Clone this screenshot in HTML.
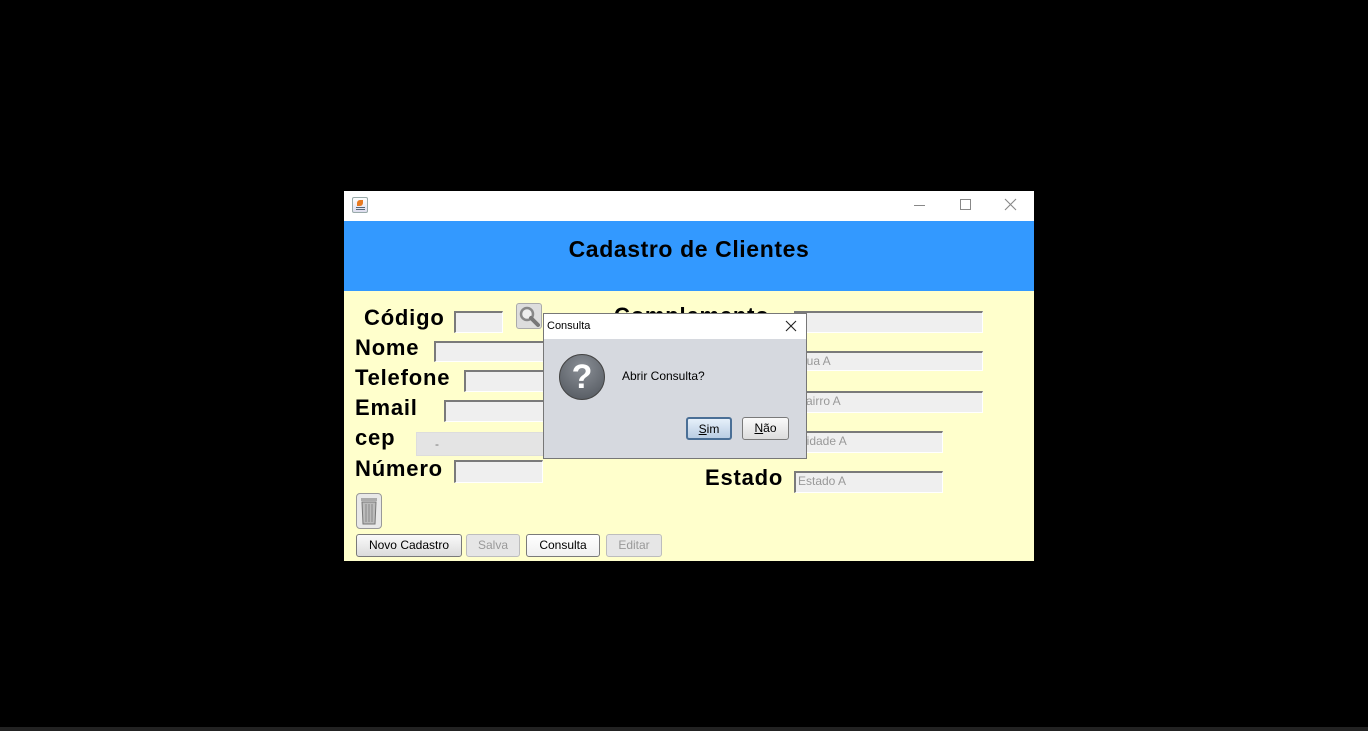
<!DOCTYPE html>
<html><head><meta charset="utf-8"><style>
*{margin:0;padding:0;box-sizing:border-box}
body{width:1368px;height:731px;background:#000;position:relative;overflow:hidden;font-family:"Liberation Sans",sans-serif}
.a{position:absolute}
.lbl{position:absolute;font-weight:bold;font-size:22px;color:#000;line-height:22px;letter-spacing:0.8px}
.fld{position:absolute;background:#efefef;border-top:2px solid #7a7a7a;border-left:2px solid #7a7a7a;border-right:1px solid #fff;border-bottom:1px solid #fff;font-size:12px;color:#999;padding-left:2px;line-height:17px}
.btn{position:absolute;height:23px;border:1px solid #7a7a7a;border-radius:3px;background:linear-gradient(#fafafa,#dcdcdc);font-size:12px;text-align:center;line-height:21px;color:#000}
.dis{border-color:#bdbdbd;color:#999;background:#e6e6e6}
</style></head><body>
<div class="a" style="left:0;top:727px;width:1368px;height:4px;background:#222"></div>
<div class="a" style="left:344px;top:191px;width:690px;height:370px;background:#ffffcc"></div>
<div class="a" style="left:344px;top:191px;width:690px;height:30px;background:#fff"></div>
<div class="a" style="left:352px;top:197px;width:16px;height:16px;border:1px solid #9aa;border-radius:2px;background:linear-gradient(#fff,#dde);"><div class="a" style="left:4px;top:2px;width:6px;height:6px;background:#e87a20;border-radius:50% 0"></div><div class="a" style="left:3px;top:9px;width:9px;height:1px;background:#567"></div><div class="a" style="left:3px;top:11px;width:9px;height:1px;background:#567"></div></div>
<div class="a" style="left:914px;top:205px;width:11px;height:1px;background:#888"></div>
<div class="a" style="left:960px;top:199px;width:11px;height:11px;border:1px solid #888"></div>
<svg class="a" style="left:1004px;top:198px" width="13" height="13"><path d="M1 1L12 12M12 1L1 12" stroke="#888" stroke-width="1.1"/></svg>
<div class="a" style="left:344px;top:221px;width:690px;height:70px;background:#3399ff"></div>
<div class="a" style="left:344px;top:235px;width:690px;text-align:center;font-size:23px;font-weight:bold;line-height:28px;letter-spacing:0.6px">Cadastro de Clientes</div>

<div class="lbl" style="left:364px;top:307px">Código</div>
<div class="lbl" style="left:355px;top:337px">Nome</div>
<div class="lbl" style="left:355px;top:367px">Telefone</div>
<div class="lbl" style="left:355px;top:397px">Email</div>
<div class="lbl" style="left:355px;top:427px">cep</div>
<div class="lbl" style="left:355px;top:458px">Número</div>
<div class="lbl" style="left:614px;top:305px">Complemento</div>
<div class="lbl" style="left:705px;top:467px">Estado</div>

<div class="fld" style="left:454px;top:311px;width:49px;height:22px"></div>
<div class="fld" style="left:434px;top:341px;width:120px;height:21px"></div>
<div class="fld" style="left:464px;top:370px;width:90px;height:22px"></div>
<div class="fld" style="left:444px;top:400px;width:110px;height:22px"></div>
<div class="fld" style="left:416px;top:432px;width:140px;height:24px;border:1px solid #ddd;background:#e4e4e4;padding-left:18px;line-height:22px;color:#777">-</div>
<div class="fld" style="left:454px;top:460px;width:89px;height:23px"></div>
<div class="fld" style="left:794px;top:311px;width:189px;height:22px"></div>
<div class="fld" style="left:794px;top:351px;width:189px;height:20px">Rua A</div>
<div class="fld" style="left:794px;top:391px;width:189px;height:22px">Bairro A</div>
<div class="fld" style="left:794px;top:431px;width:149px;height:22px">Cidade A</div>
<div class="fld" style="left:794px;top:471px;width:149px;height:22px">Estado A</div>

<div class="a" style="left:516px;top:303px;width:26px;height:26px;border:1px solid #aaa;border-radius:3px;background:#ddd"><svg width="24" height="24"><circle cx="10" cy="10" r="6" fill="#eee" stroke="#888" stroke-width="2.5"/><path d="M14 14L21 21" stroke="#777" stroke-width="4" stroke-linecap="round"/></svg></div>
<div class="a" style="left:356px;top:493px;width:26px;height:36px;border:1px solid #999;border-radius:4px;background:#e8e8e8"><svg width="24" height="34"><rect x="4" y="4" width="16" height="3" fill="#aaa"/><path d="M5 8h14l-1 22H6z" fill="#bbb" stroke="#777"/><path d="M9 10v18M12 10v18M15 10v18" stroke="#888"/></svg></div>

<div class="btn" style="left:356px;top:534px;width:106px">Novo Cadastro</div>
<div class="btn dis" style="left:466px;top:534px;width:54px">Salva</div>
<div class="btn" style="left:526px;top:534px;width:74px;background:linear-gradient(#fff,#f0f0f0)">Consulta</div>
<div class="btn dis" style="left:606px;top:534px;width:56px">Editar</div>

<div class="a" style="left:543px;top:313px;width:264px;height:146px;background:#d6d9df;border:1px solid #777"></div>
<div class="a" style="left:544px;top:314px;width:262px;height:25px;background:#fff;font-size:11px;line-height:24px;padding-left:3px">Consulta</div>
<svg class="a" style="left:785px;top:320px" width="12" height="12"><path d="M1 1L11 11M11 1L1 11" stroke="#222" stroke-width="1.1"/></svg>
<div class="a" style="left:559px;top:354px;width:46px;height:46px;border-radius:50%;background:radial-gradient(circle at 50% 30%,#8a8f96,#4f545b);border:1px solid #444;color:#fff;font-weight:bold;font-size:34px;text-align:center;line-height:44px">?</div>
<div class="a" style="left:622px;top:369px;font-size:12px">Abrir Consulta?</div>
<div class="btn" style="left:686px;top:417px;width:46px;border:2px solid #4a6f96;background:linear-gradient(#e6f0fa,#b9cde3)"><u>S</u>im</div>
<div class="btn" style="left:742px;top:417px;width:47px"><u>N</u>ão</div>
</body></html>
